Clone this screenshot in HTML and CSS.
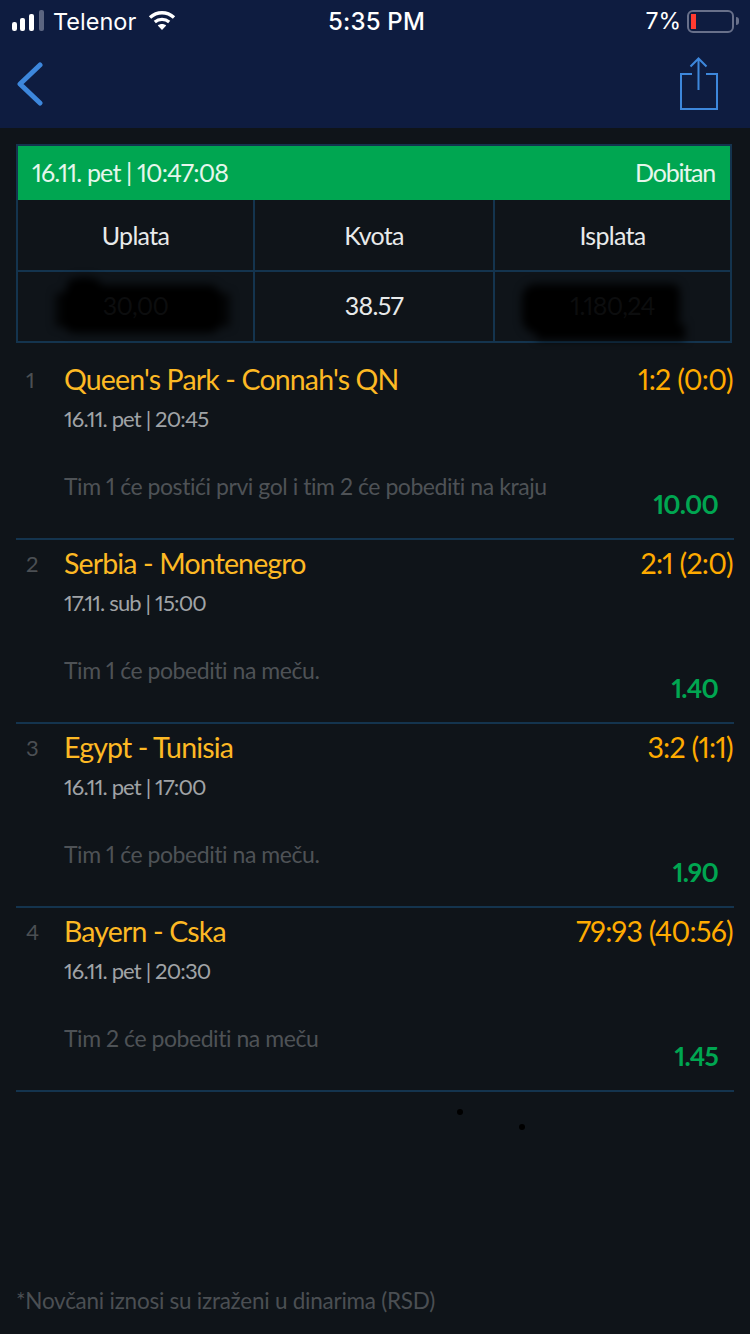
FILE: index.html
```html
<!DOCTYPE html>
<html lang="sr">

  <head>
    <meta charset="UTF-8">
    <meta name="viewport" content="width=device-width, initial-scale=1.0">
    <title>Tiket</title>
    <link rel="stylesheet" href="styles.css">
  </head>

  <body>
    <div class="page">
      <header class="top">
        <div class="status">
          <div class="status-left">
            <svg class="signal" width="36" height="24" viewBox="0 0 36 24">
              <rect x="0" y="13" width="5" height="9" rx="2.2" fill="#fff"/>
              <rect x="8" y="9" width="5" height="13" rx="2" fill="#fff"/>
              <rect x="17" y="5" width="5" height="17" rx="2" fill="#fff"/>
              <rect x="27" y="1" width="5" height="21" rx="2" fill="#5b6580"/>
            </svg>
            <span class="carrier">Telenor</span>
            <svg class="wifi" width="28" height="20" viewBox="0 0 28 20">
              <path d="M2 7.5C9 1.2 19 1.2 26 7.5" fill="none" stroke="#fff" stroke-width="3.4"/>
              <path d="M6.8 12C11 8.4 17 8.4 21.2 12" fill="none" stroke="#fff" stroke-width="3.2"/>
              <path d="M14 20L9.8 15.6C12 13.6 16 13.6 18.2 15.6Z" fill="#fff"/>
            </svg>
          </div>
          <div class="status-time">5:35 PM</div>
          <div class="status-right">
            <span class="percent">7%</span>
            <div class="battery"><div class="battery-level"></div></div>
            <div class="battery-nub"></div>
          </div>
        </div>
        <nav class="nav">
          <svg class="back" width="26" height="44" viewBox="0 0 26 44">
            <path d="M23 3L3 22L23 41" fill="none" stroke="#3d87dc" stroke-width="5" stroke-linecap="round" stroke-linejoin="round"/>
          </svg>
          <svg class="share" width="40" height="54" viewBox="0 0 40 54">
            <path d="M13 17H2V52H38V17H27" fill="none" stroke="#3d87dc" stroke-width="2"/>
            <path d="M19.5 2V33M11.5 9.5L19.5 1.5L27.5 9.5" fill="none" stroke="#3d87dc" stroke-width="2"/>
          </svg>
        </nav>
      </header>

      <main class="content">
        <section class="summary">
          <div class="summary-head">
            <span class="head-date">16.11. pet | 10:47:08</span>
            <span class="head-state">Dobitan</span>
          </div>
          <div class="summary-row">
            <div class="cell">Uplata</div>
            <div class="cell">Kvota</div>
            <div class="cell">Isplata</div>
          </div>
          <div class="summary-row summary-values">
            <div class="cell"><div class="smear smear-left"></div><span class="hidden-value">30,00</span></div>
            <div class="cell">38.57</div>
            <div class="cell"><div class="smear smear-right"></div><span class="hidden-value">1.180,24</span></div>
          </div>
        </section>

        <ul class="matches">
          <li class="match">
            <div class="match-num">1</div>
            <div class="match-body">
              <div class="match-top"><span class="teams">Queen's Park - Connah's QN</span><span class="score">1:2 (0:0)</span></div>
              <div class="match-date">16.11. pet | 20:45</div>
              <div class="match-foot"><span class="tip">Tim 1 će postići prvi gol i tim 2 će pobediti na kraju</span><span class="odds">10.00</span></div>
            </div>
          </li>
          <li class="match">
            <div class="match-num">2</div>
            <div class="match-body">
              <div class="match-top"><span class="teams">Serbia - Montenegro</span><span class="score">2:1 (2:0)</span></div>
              <div class="match-date">17.11. sub | 15:00</div>
              <div class="match-foot"><span class="tip">Tim 1 će pobediti na meču.</span><span class="odds">1.40</span></div>
            </div>
          </li>
          <li class="match">
            <div class="match-num">3</div>
            <div class="match-body">
              <div class="match-top"><span class="teams">Egypt - Tunisia</span><span class="score">3:2 (1:1)</span></div>
              <div class="match-date">16.11. pet | 17:00</div>
              <div class="match-foot"><span class="tip">Tim 1 će pobediti na meču.</span><span class="odds">1.90</span></div>
            </div>
          </li>
          <li class="match">
            <div class="match-num">4</div>
            <div class="match-body">
              <div class="match-top"><span class="teams">Bayern - Cska</span><span class="score">79:93 (40:56)</span></div>
              <div class="match-date">16.11. pet | 20:30</div>
              <div class="match-foot"><span class="tip">Tim 2 će pobediti na meču</span><span class="odds">1.45</span></div>
            </div>
          </li>
        </ul>

        <p class="note">*Novčani iznosi su izraženi u dinarima (RSD)</p>
      </main>

      <!-- dust on the screen -->
      <div class="speck speck-a"></div>
      <div class="speck speck-b"></div>
    </div>
  </body>

</html>
```

FILE: styles.css
```css
* {
  padding: 0;
  margin: 0;
  box-sizing: border-box;
}

ul {
  list-style: none;
}

body {
  background-color: #0f1419;
  font-family: "Lato", "Liberation Sans", sans-serif;
  font-variant-numeric: proportional-nums;
}

.page {
  position: relative;
  width: 750px;
  height: 1334px;
  display: flex;
  flex-direction: column;
  overflow: hidden;
}

/* top bar */
.top {
  height: 128px;
  background-color: #0e1c40;
  flex-shrink: 0;
}

.status {
  height: 42px;
  padding: 0 11px 0 12px;
  display: grid;
  grid-template-columns: 1fr auto 1fr;
  align-items: center;
  color: #fff;
  font-family: "Inter", "Liberation Sans", sans-serif;
  font-size: 23px;
}

.status-left {
  display: flex;
  align-items: center;
}

.signal {
  margin-top: -1px;
}

.carrier {
  margin-left: 5px;
  font-size: 23.5px;
}

.wifi {
  margin-left: 12px;
  margin-top: -2px;
}

.status-time {
  font-size: 24px;
  font-weight: 500;
  letter-spacing: .2px;
  padding-left: 2px;
}

.status-right {
  display: flex;
  align-items: center;
  justify-content: flex-end;
}

.percent {
  margin-right: 6px;
}

.battery {
  width: 47px;
  height: 23px;
  border: 2px solid #68708a;
  border-radius: 6px;
  padding: 2px;
}

.battery-level {
  width: 5px;
  height: 100%;
  background-color: #ff3b30;
}

.battery-nub {
  width: 3px;
  height: 8px;
  margin-left: 2px;
  background-color: #68708a;
  border-radius: 0 3px 3px 0;
}

.nav {
  height: 86px;
  padding: 0 31px 0 17px;
  display: flex;
  justify-content: space-between;
  align-items: flex-start;
}

.back {
  margin-top: 20px;
}

.share {
  margin-top: 15px;
}

/* content */
.content {
  flex: 1;
  display: flex;
  flex-direction: column;
  padding: 16px 16px 0;
}

.summary {
  width: 716px;
  border: 2px solid #14344e;
  color: #e8eaea;
  font-size: 25px;
  letter-spacing: -.7px;
}

.summary-head {
  height: 54px;
  padding: 0 15px 2px 14px;
  display: flex;
  justify-content: space-between;
  align-items: center;
  background-color: #00a651;
  color: #e6f6ec;
}

.head-date {
  letter-spacing: -.85px;
}

.head-state {
  letter-spacing: -1.2px;
}

.summary-row {
  height: 70px;
  padding-bottom: 2px;
  display: grid;
  grid-template-columns: 235px 240px 1fr;
}

.summary-values {
  height: 71px;
  padding-bottom: 0;
  border-top: 2px solid #14344e;
}

.cell {
  position: relative;
  display: flex;
  justify-content: center;
  align-items: center;
}

.cell + .cell {
  border-left: 2px solid #14344e;
}

.summary-row .cell {
  margin-bottom: -2px;
}

.summary-values .cell {
  margin-bottom: 0;
  padding-bottom: 3px;
}

.hidden-value {
  position: relative;
  color: #0c0d0e;
}

.smear {
  position: absolute;
  background-color: #000;
  filter: blur(4px);
}

.smear-left {
  left: 45px;
  top: 13px;
  width: 158px;
  height: 48px;
  border-radius: 12px;
}

.smear-left:before {
  content: "";
  position: absolute;
  left: -8px;
  top: 8px;
  width: 175px;
  height: 34px;
  background-color: rgba(0, 0, 0, .75);
}

.smear-left:after {
  content: "";
  position: absolute;
  left: 4px;
  top: -8px;
  width: 34px;
  height: 14px;
  border-radius: 50%;
  background-color: #000;
}

.smear-right {
  left: 27px;
  top: 12px;
  width: 158px;
  height: 50px;
  border-radius: 14px 8px 18px 16px;
}

.smear-right:after {
  content: "";
  position: absolute;
  left: 15px;
  bottom: -6px;
  width: 148px;
  height: 16px;
  background-color: #000;
}

.matches {
  margin-top: 13px;
  width: 718px;
}

.match {
  height: 184px;
  padding: 6px 0 19px;
  display: flex;
  border-bottom: 2px solid #14344e;
}

.match-num {
  width: 48px;
  padding-left: 10px;
  line-height: 36px;
  font-size: 22px;
  color: #4b4f53;
}

.match-body {
  flex: 1;
  display: flex;
  flex-direction: column;
}

.match-top {
  display: flex;
  justify-content: space-between;
  line-height: 34px;
  height: 36px;
}

.teams {
  font-size: 28.5px;
  letter-spacing: -.85px;
  color: #fdb924;
}

.score {
  padding-right: 1px;
  font-size: 28.5px;
  letter-spacing: -.7px;
  color: #ffab00;
}

.match-date {
  margin-top: 5px;
  padding-top: 1px;
  line-height: 30px;
  height: 31px;
  font-size: 22px;
  letter-spacing: -.85px;
  color: #a0a3a6;
}

.match-foot {
  margin-top: 38px;
  height: 47px;
  padding-right: 16px;
  display: flex;
  justify-content: space-between;
  align-items: flex-end;
}

.tip {
  align-self: flex-start;
  line-height: 28px;
  font-size: 23px;
  letter-spacing: -.45px;
  color: #4e5256;
}

.odds {
  line-height: 30px;
  font-size: 26px;
  font-weight: 700;
  letter-spacing: -.8px;
  color: #00a651;
}

.note {
  margin-top: auto;
  margin-bottom: 18px;
  line-height: 30px;
  font-size: 22.5px;
  letter-spacing: -.25px;
  color: #4b4f53;
}

.speck {
  position: absolute;
  width: 6px;
  height: 6px;
  border-radius: 50%;
  background-color: #000;
  filter: blur(.5px);
}

.speck-a {
  left: 457px;
  top: 1109px;
}

.speck-b {
  left: 519px;
  top: 1124px;
}
```
